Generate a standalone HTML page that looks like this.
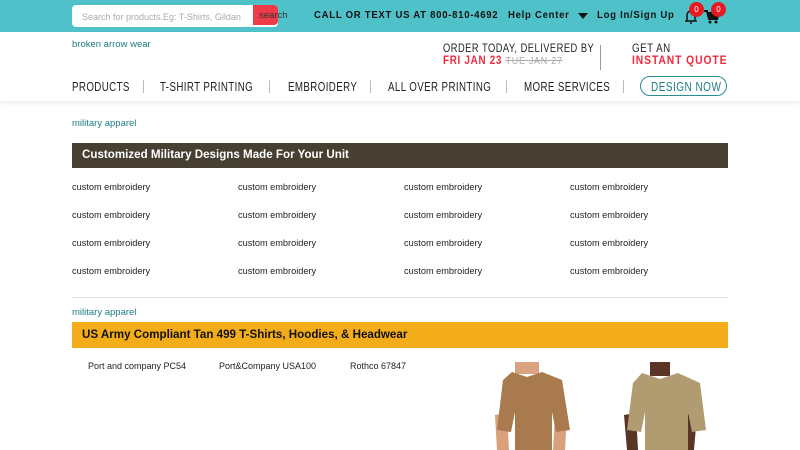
<!DOCTYPE html>
<html><head><meta charset="utf-8"><style>
*{margin:0;padding:0;box-sizing:border-box}
body{width:800px;height:450px;overflow:hidden;background:#fff;font-family:"Liberation Sans",sans-serif;position:relative}
.a{position:absolute;white-space:nowrap}
.sx{transform-origin:0 0}
.top{position:absolute;left:0;top:0;width:800px;height:32px;background:#4fc2c9}
.srch{left:72px;top:5px;width:206px;height:22px;background:#fff;border-radius:4px;font-size:9px;color:#aaa;padding:7px 0 0 10px}
.sb{left:253px;top:5px;width:25px;height:20px;background:#ef3a4a;border-radius:0 4px 4px 0}
.tb{font-weight:bold;font-size:10.5px;color:#111;letter-spacing:.8px;top:9px;transform:scaleX(.91);transform-origin:0 0}
.badge{width:15px;height:15px;border-radius:50%;background:#e21b23;color:#fff;font-size:8px;text-align:center;line-height:15px;top:2px}
.hdr{position:absolute;left:0;top:32px;width:800px;height:69px;background:#fff;box-shadow:0 2px 4px rgba(0,0,0,.08)}
.nav{top:80px;font-size:12.5px;color:#222;letter-spacing:.5px;transform:scaleX(.78);transform-origin:0 0}
.sep{top:80px;width:1px;height:13px;background:#bbb}
.link{color:#1c7d84;font-size:9.5px}
.ce{font-size:9.2px;color:#222;height:10px}
</style></head><body>
<div class="top"></div>
<div class="a srch">Search for products.Eg: T-Shirts, Gildan</div>
<div class="a sb"></div>
<div class="a" style="left:259px;top:10px;font-size:9.5px;color:#333">search</div>
<div class="a tb" style="left:314px">CALL OR TEXT US AT 800-810-4692</div>
<div class="a tb" style="left:508px">Help Center</div>
<div class="a" style="left:578px;top:13px;width:0;height:0;border-left:5px solid transparent;border-right:5px solid transparent;border-top:6px solid #111"></div>
<div class="a tb" style="left:597px">Log In/Sign Up</div>
<svg class="a" style="left:682px;top:8px" width="40" height="16" viewBox="0 0 40 16"><path d="M3 13h12M5 13V7a4 4 0 0 1 8 0v6M8 15h2" stroke="#111" stroke-width="1.5" fill="none"/><path d="M22 3h3l2 8h8l2-6H26" stroke="#111" stroke-width="2" fill="#111"/><circle cx="28" cy="14" r="1.5" fill="#111"/><circle cx="34" cy="14" r="1.5" fill="#111"/></svg>
<div class="a badge" style="left:689px">0</div>
<div class="a badge" style="left:711px">0</div>
<div class="hdr"></div>
<div class="a link" style="left:72px;top:39px">broken arrow wear</div>
<div class="a sx" style="left:443px;top:43px;font-size:11.5px;letter-spacing:.6px;color:#222;transform:scaleX(.81)">ORDER TODAY, DELIVERED BY</div>
<div class="a sx" style="left:443px;top:55px;font-size:11.5px;font-weight:bold;letter-spacing:.8px;color:#ef2a3c;transform:scaleX(.86)">FRI JAN 23 <span style="font-weight:normal;color:#aaa;text-decoration:line-through;font-size:10.5px">TUE JAN 27</span></div>
<div class="a" style="left:600px;top:45px;width:1px;height:25px;background:#999"></div>
<div class="a sx" style="left:632px;top:43px;font-size:11.5px;letter-spacing:.6px;color:#222;transform:scaleX(.85)">GET AN</div>
<div class="a sx" style="left:632px;top:55px;font-size:11.5px;font-weight:bold;letter-spacing:1px;color:#ef2a3c;transform:scaleX(.9)">INSTANT QUOTE</div>
<div class="a nav" style="left:72px">PRODUCTS</div><div class="a sep" style="left:143px"></div>
<div class="a nav" style="left:160px">T-SHIRT PRINTING</div><div class="a sep" style="left:269px"></div>
<div class="a nav" style="left:288px">EMBROIDERY</div><div class="a sep" style="left:370px"></div>
<div class="a nav" style="left:388px">ALL OVER PRINTING</div><div class="a sep" style="left:506px"></div>
<div class="a nav" style="left:524px">MORE SERVICES</div><div class="a sep" style="left:623px"></div>
<div class="a" style="left:640px;top:76px;width:87px;height:20px;border:1.5px solid #2a8d92;border-radius:10px"></div>
<div class="a sx" style="left:651px;top:80px;color:#1c7d84;font-size:12.5px;letter-spacing:.6px;transform:scaleX(.8)">DESIGN NOW</div>
<div class="a link" style="left:72px;top:118px">military apparel</div>
<div class="a" style="left:72px;top:143px;width:656px;height:25px;background:#463f32;color:#fff;font-weight:bold;font-size:11.6px;padding:5px 0 0 10px">Customized Military Designs Made For Your Unit</div>
<div class="a" style="left:72px;top:182px;width:656px">
<div style="display:grid;grid-template-columns:166px 166px 166px 158px;row-gap:18px">
<div class="ce">custom embroidery</div><div class="ce">custom embroidery</div><div class="ce">custom embroidery</div><div class="ce">custom embroidery</div>
<div class="ce">custom embroidery</div><div class="ce">custom embroidery</div><div class="ce">custom embroidery</div><div class="ce">custom embroidery</div>
<div class="ce">custom embroidery</div><div class="ce">custom embroidery</div><div class="ce">custom embroidery</div><div class="ce">custom embroidery</div>
<div class="ce">custom embroidery</div><div class="ce">custom embroidery</div><div class="ce">custom embroidery</div><div class="ce">custom embroidery</div>
</div></div>
<div class="a" style="left:72px;top:297px;width:656px;height:1px;background:#e5e5e5"></div>
<div class="a link" style="left:72px;top:307px">military apparel</div>
<div class="a" style="left:72px;top:322px;width:656px;height:26px;background:#f4ad1a;color:#111;font-weight:bold;font-size:11.6px;padding:6px 0 0 10px">US Army Compliant Tan 499 T-Shirts, Hoodies, &amp; Headwear</div>
<div class="a ce" style="left:88px;top:361px;font-size:9px">Port and company PC54</div>
<div class="a ce" style="left:219px;top:361px;font-size:9px">Port&amp;Company USA100</div>
<div class="a ce" style="left:350px;top:361px;font-size:9px">Rothco 67847</div>
<svg class="a" style="left:477px;top:360px" width="240" height="90" viewBox="0 0 240 90">
<path d="M20 90l-2-35 12-2 2 37z M88 90l2-35-12-2-2 37z" fill="#d9a07c"/>
<path d="M38 2h24v12H38z" fill="#d9a37f"/>
<path d="M35 12l15 5 15-5 20 8 8 50-14 2-4-20 0 38H38l0-38-4 20-14-2 6-50z" fill="#a87a4d"/>
<path d="M150 90l-3-35 12-2 2 37z M217 90l3-35-12-2-2 37z" fill="#5a3424"/>
<path d="M173 2h20v14h-20z" fill="#5a3424"/>
<path d="M165 13l18 6 18-6 22 10 6 47-14 2-4-20 0 38H168l0-38-4 20-14-2 6-47z" fill="#b19b71"/>
</svg>
</body></html>
